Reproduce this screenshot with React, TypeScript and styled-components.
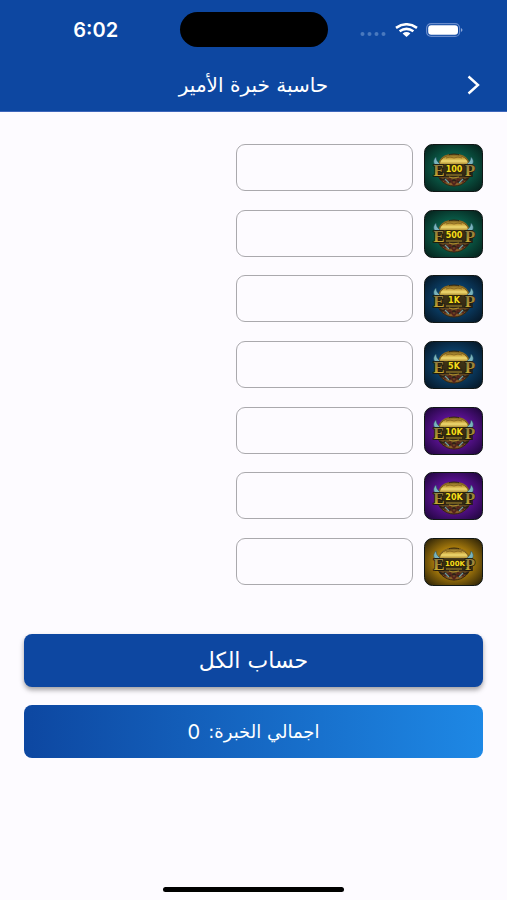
import React, { FormEvent, useState } from "react";
import styled, { createGlobalStyle } from "styled-components";

const GlobalStyle = createGlobalStyle`
  *, *::before, *::after { box-sizing: border-box; }
  body {
    margin: 0;
    background: #fdfbff;
    font-family: "DejaVu Sans", sans-serif;
  }
`;

const Page = styled.div`
  display: flex;
  flex-direction: column;
  min-height: 100vh;
`;

const Header = styled.header`
  background: #0d47a1;
  color: #fff;
  border-bottom: 1px solid #3d66bb;
`;

const StatusBar = styled.div`
  display: grid;
  grid-template-columns: 1fr 148px 1fr;
  align-items: center;
  padding-top: 12px;
  direction: ltr;
`;

const Clock = styled.time`
  padding-left: 12px;
  text-align: center;
  font: 600 20px/24px Inter, sans-serif;
`;

const Island = styled.div`
  height: 35px;
  border-radius: 18px;
  background: #000;
`;

const Indicators = styled.div`
  display: flex;
  justify-content: flex-end;
  align-items: center;
  gap: 8px;
  padding-right: 44px;
`;

const AppBar = styled.div`
  display: grid;
  grid-template-columns: 44px 1fr 44px;
  align-items: center;
  height: 64px;
  padding: 12px 12px 0;
`;

const BackButton = styled.button`
  display: grid;
  place-items: center;
  width: 44px;
  height: 44px;
  padding: 0;
  border: 0;
  background: none;
  color: inherit;
`;

const Title = styled.h1`
  margin: 0;
  text-align: center;
  font-size: 20px;
  font-weight: 400;
  line-height: 32px;
`;

const Calculator = styled.form`
  display: flex;
  flex-direction: column;
  gap: 18px;
  padding: 32px 24px 24px;
`;

const PackList = styled.div`
  display: flex;
  flex-direction: column;
  justify-content: space-between;
  min-height: 442px;
  margin-bottom: 30px;
`;

const PackRow = styled.label`
  display: flex;
  gap: 11px;
`;

const Badge = styled.svg`
  flex: none;
  width: 59px;
  height: 48px;
`;

const Amount = styled.input`
  width: 177px;
  height: 47px;
  padding: 0 12px;
  border: 1px solid #aaa9ad;
  border-radius: 9px;
  background: transparent;
  font: 18px "DejaVu Sans", sans-serif;
  color: #1b1b1f;
`;

const CalculateButton = styled.button`
  height: 53px;
  border: 0;
  border-radius: 8px;
  background: #0d47a1;
  box-shadow: 0 3px 5px rgba(0, 0, 0, 0.36);
  color: #fff;
  font: 22px/32px "DejaVu Sans", sans-serif;
`;

const Total = styled.output`
  display: flex;
  justify-content: center;
  align-items: center;
  gap: 8px;
  height: 53px;
  border-radius: 8px;
  background: linear-gradient(to left, #1e88e5, #0d47a1);
  color: #fff;
  font-size: 18px;
  line-height: 32px;
`;

const TotalValue = styled.span`
  font-family: Inter, sans-serif;
  font-size: 20px;
`;

const HomeIndicator = styled.div`
  width: 181px;
  height: 5px;
  margin: auto auto 8px;
  border-radius: 3px;
  background: #000;
`;

type Pack = { label: string; value: number; glow: string; edge: string };

const packs: Pack[] = [
  { label: "100", value: 100, glow: "#0a6650", edge: "#06231d" },
  { label: "500", value: 500, glow: "#0a6650", edge: "#06231d" },
  { label: "1K", value: 1000, glow: "#0b4674", edge: "#061828" },
  { label: "5K", value: 5000, glow: "#0b4674", edge: "#061828" },
  { label: "10K", value: 10000, glow: "#6614a3", edge: "#220640" },
  { label: "20K", value: 20000, glow: "#6614a3", edge: "#220640" },
  { label: "100K", value: 100000, glow: "#c48f0c", edge: "#302508" },
];

function PackBadge({ label, glow, edge }: Pack) {
  const bg = `bg-${label}`;
  const gold = `gold-${label}`;
  const letter = `letter-${label}`;
  const letterStyle = {
    y: 32,
    textAnchor: "middle" as const,
    fontFamily: "Liberation Serif, serif",
    fontWeight: 700,
    fontSize: 17,
    fill: `url(#${letter})`,
    stroke: "#1d170b",
    strokeWidth: 1.4,
    paintOrder: "stroke",
  };
  return (
    <Badge viewBox="0 0 59 48" direction="ltr" aria-hidden="true">
      <defs>
        <radialGradient id={bg} cx="50%" cy="50%" r="65%">
          <stop offset="0.35" stopColor={glow} />
          <stop offset="1" stopColor={edge} />
        </radialGradient>
        <linearGradient id={gold} x1="0" y1="0" x2="0" y2="1">
          <stop offset="0" stopColor="#6f5417" />
          <stop offset="0.14" stopColor="#c9a540" />
          <stop offset="0.22" stopColor="#efd970" />
          <stop offset="0.36" stopColor="#96701c" />
          <stop offset="0.7" stopColor="#5e4420" />
          <stop offset="1" stopColor="#94632a" />
        </linearGradient>
        <linearGradient id={letter} x1="0" y1="0" x2="0" y2="1">
          <stop offset="0" stopColor="#84764a" />
          <stop offset="0.55" stopColor="#a58c32" />
          <stop offset="1" stopColor="#e3c135" />
        </linearGradient>
      </defs>
      <rect x="0.5" y="0.5" width="58" height="47" rx="8" fill={`url(#${bg})`} stroke="#101716" />
      <ellipse cx="30" cy="26" rx="17" ry="16" fill={`url(#${gold})`} stroke="#33260e" />
      <path d="M15 20Q17 12 25 11M45 20Q43 12 35 11" fill="none" stroke="#8b6a20" strokeWidth="1.4" />
      <path d="M22 14q4-2 8 0q4-2 8 0" fill="none" stroke="#80601b" strokeWidth="0.8" />
      <path d="M12 13q-4 4-1 8l4 2 1-3q-4-3-4-7zM47 13q4 4 1 8l-4 2-1-3q4-3 4-7z" fill="#79b3bd" stroke="#2b5660" strokeWidth="0.5" />
      <path d="M16 34q2 3 5 1l4 3 5-2 5 2 4-3q3 2 5-1" fill="none" stroke="#2b2118" strokeWidth="2" />
      <path d="M20 38l6-3 4 6 4-6 6 3" fill="none" stroke="#54251d" strokeWidth="2" />
      <path d="M21 35l4 4M39 35l-4 4" stroke="#6d9d9d" strokeWidth="1.2" />
      <path d="M11 20h38v13H11z" fill="#211e13" opacity="0.75" />
      <text x="15" {...letterStyle}>E</text>
      <text x="46" {...letterStyle}>P</text>
      <path d="M22 31h16M25 33l4 1 6-1" stroke="#aa8d2c" fill="none" />
      <text
        x={label.length > 3 ? 31 : 30}
        y="28"
        textAnchor="middle"
        fontFamily="DejaVu Sans, sans-serif"
        fontWeight="700"
        fontSize={label.length > 3 ? 7 : 8}
        fill="#f5dc1b"
        stroke="#302709"
        strokeWidth="2"
        paintOrder="stroke"
      >
        {label}
      </text>
    </Badge>
  );
}

function StatusIcons() {
  return (
    <Indicators>
      <svg width="27" height="14" viewBox="0 0 27 14" fill="#4a79be" aria-hidden="true">
        <circle cx="2.5" cy="11" r="2" />
        <circle cx="9.5" cy="11" r="2" />
        <circle cx="16.5" cy="11" r="2" />
        <circle cx="23.5" cy="11" r="2" />
      </svg>
      <svg width="23" height="14" viewBox="0 0 23 14" fill="none" stroke="#fff" strokeWidth="2.6" aria-hidden="true">
        <path d="M1 4.8Q11.5-2.2 22 4.8M4.6 8.2Q11.5 3.4 18.4 8.2" />
        <path d="M7.6 10.4Q11.5 7.6 15.4 10.4L11.5 14Z" fill="#fff" stroke="none" />
      </svg>
      <svg width="37" height="14" viewBox="0 0 37 14" aria-hidden="true">
        <rect x="0.6" y="0.6" width="33" height="12.8" rx="4.5" fill="none" stroke="#688bcb" strokeWidth="1.2" />
        <rect x="2.2" y="2.2" width="29.8" height="9.6" rx="3" fill="#fff" />
        <path d="M35 5q3 2 0 4z" fill="#8ba7d8" />
      </svg>
    </Indicators>
  );
}

export default function App() {
  const [counts, setCounts] = useState<string[]>(packs.map(() => ""));
  const [total, setTotal] = useState(0);

  const calculate = (event: FormEvent) => {
    event.preventDefault();
    setTotal(packs.reduce((sum, pack, i) => sum + pack.value * (Number(counts[i]) || 0), 0));
  };

  return (
    <Page dir="rtl" lang="ar">
      <GlobalStyle />
      <Header>
        <StatusBar>
          <Clock>6:02</Clock>
          <Island />
          <StatusIcons />
        </StatusBar>
        <AppBar>
          <BackButton type="button" aria-label="رجوع">
            <svg width="14" height="20" viewBox="0 0 14 20" fill="none" stroke="currentColor" strokeWidth="2.4" aria-hidden="true">
              <path d="M2.5 1.5L12 10L2.5 18.5" />
            </svg>
          </BackButton>
          <Title>حاسبة خبرة الأمير</Title>
        </AppBar>
      </Header>
      <Calculator onSubmit={calculate}>
        <PackList>
          {packs.map((pack, i) => (
            <PackRow key={pack.label}>
              <PackBadge {...pack} />
              <Amount
                inputMode="numeric"
                aria-label={pack.label}
                value={counts[i]}
                onChange={(e) => setCounts(counts.map((c, j) => (j === i ? e.target.value : c)))}
              />
            </PackRow>
          ))}
        </PackList>
        <CalculateButton type="submit">حساب الكل</CalculateButton>
        <Total>
          <span>اجمالي الخبرة:</span>
          <TotalValue>{total}</TotalValue>
        </Total>
      </Calculator>
      <HomeIndicator />
    </Page>
  );
}
